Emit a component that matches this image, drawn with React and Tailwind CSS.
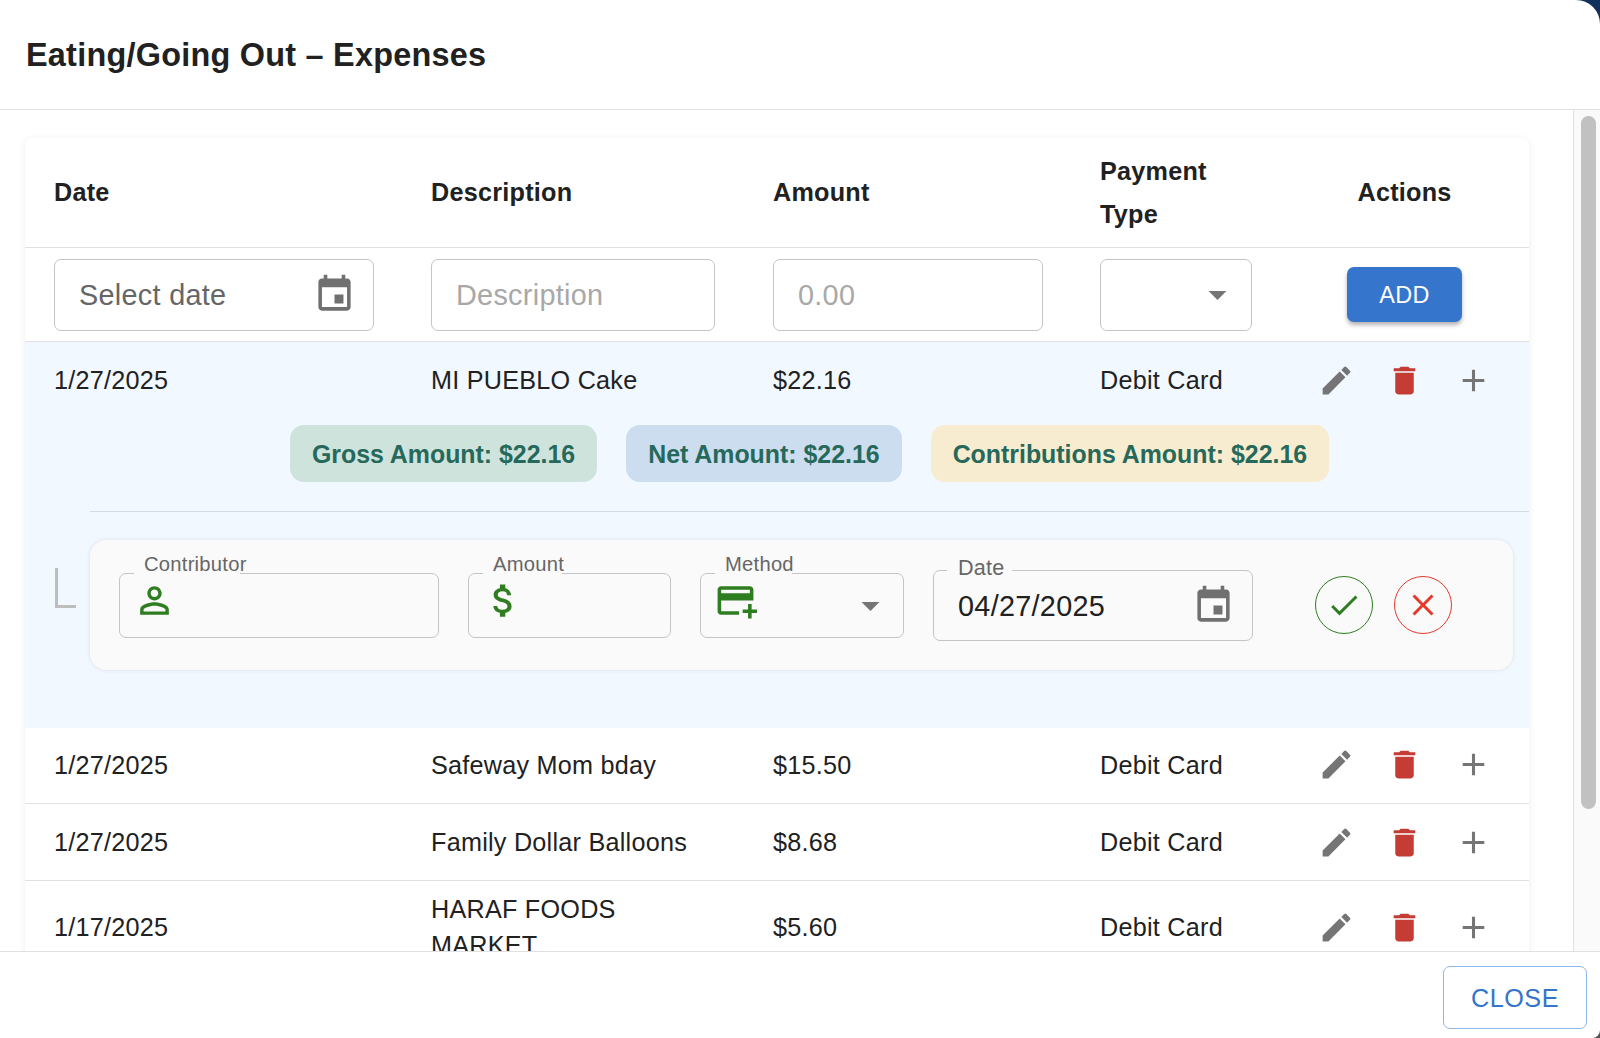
import React from "react";

const ROW_GRID = "grid grid-cols-[377px_341px_328px_209px_249px] items-center";

const ICONS = {
  edit: "M3 17.25V21h3.75L17.81 9.94l-3.75-3.75zM20.71 7.04c.39-.39.39-1.02 0-1.41l-2.34-2.34a.9959.9959 0 0 0-1.41 0l-1.83 1.83 3.75 3.75z",
  trash: "M6 19c0 1.1.9 2 2 2h8c1.1 0 2-.9 2-2V7H6zM19 4h-3.5l-1-1h-5l-1 1H5v2h14z",
  plus: "M19 13h-6v6h-2v-6H5v-2h6V5h2v6h6z",
  event: "M17 12h-5v5h5zM16 1v2H8V1H6v2H5c-1.11 0-1.99.9-1.99 2L3 19c0 1.1.89 2 2 2h14c1.1 0 2-.9 2-2V5c0-1.1-.9-2-2-2h-1V1zm3 18H5V8h14z",
  arrow: "M7 10l5 5 5-5z",
  person: "M12 5.9c1.16 0 2.1.94 2.1 2.1s-.94 2.1-2.1 2.1S9.9 9.16 9.9 8s.94-2.1 2.1-2.1m0 9c2.97 0 6.1 1.46 6.1 2.1v1.1H5.9V17c0-.64 3.13-2.1 6.1-2.1M12 4C9.79 4 8 5.79 8 8s1.79 4 4 4 4-1.79 4-4-1.79-4-4-4m0 9c-2.67 0-8 1.34-8 4v3h16v-3c0-2.66-5.33-4-8-4",
  money: "M11.8 10.9c-2.27-.59-3-1.2-3-2.15 0-1.09 1.01-1.85 2.7-1.85 1.78 0 2.44.85 2.5 2.1h2.21c-.07-1.72-1.12-3.3-3.21-3.81V3h-3v2.16c-1.94.42-3.5 1.68-3.5 3.61 0 2.31 1.91 3.46 4.7 4.13 2.5.6 3 1.48 3 2.41 0 .69-.49 1.79-2.7 1.79-2.06 0-2.87-.92-2.98-2.1h-2.2c.12 2.19 1.76 3.42 3.68 3.83V21h3v-2.15c1.95-.37 3.5-1.5 3.5-3.55 0-2.84-2.43-3.81-4.7-4.4",
  addCard: "M20 4H4c-1.11 0-1.99.89-1.99 2L2 18c0 1.11.89 2 2 2h10v-2H4v-6h18V6c0-1.11-.89-2-2-2m0 4H4V6h16zm4 9v2h-3v3h-2v-3h-3v-2h3v-3h2v3z",
  check: "M9 16.17 4.83 12l-1.42 1.41L9 19 21 7l-1.41-1.41z",
  close: "M19 6.41 17.59 5 12 10.59 6.41 5 5 6.41 10.59 12 5 17.59 6.41 19 12 13.41 17.59 19 19 17.59 13.41 12z",
};

const Icon = ({ name, className }) => (
  <svg viewBox="0 0 24 24" fill="currentColor" className={className}>
    <path d={ICONS[name]} />
  </svg>
);

const Actions = () => (
  <div className="flex justify-center">
    <span className="flex w-[68.5px] justify-center text-[#757575]">
      <Icon name="edit" className="h-[37px] w-[37px]" />
    </span>
    <span className="flex w-[68.5px] justify-center text-[#c43c34]">
      <Icon name="trash" className="h-[37px] w-[37px]" />
    </span>
    <span className="flex w-[68.5px] justify-center text-[#757575]">
      <Icon name="plus" className="h-[37px] w-[37px]" />
    </span>
  </div>
);

const Row = ({ date, description, amount, className }) => (
  <div className={`${ROW_GRID} ${className}`}>
    <div className="pl-[29px]">{date}</div>
    <div className="pl-[29px] pr-[30px]">{description}</div>
    <div className="pl-[30px]">{amount}</div>
    <div className="pl-[29px]">Debit Card</div>
    <Actions />
  </div>
);

// outlined field with a gap cut in the top border for its label
const Field = ({ label, width, height, notch, notchWidth, labelLeft, labelTop, labelSize, children }) => (
  <div className={`relative mt-[1px] flex shrink-0 items-center rounded-[7px] border border-[#c4c4c4] ${width} ${height}`}>
    <span className={`absolute top-[-2px] h-[4px] bg-[#fafafa] ${notch} ${notchWidth}`} />
    <span className={`absolute whitespace-nowrap leading-[24px] text-[#666666] ${labelLeft} ${labelTop} ${labelSize}`}>{label}</span>
    {children}
  </div>
);

export default function App() {
  return (
    <div className="h-screen w-full overflow-hidden bg-gradient-to-b from-[#12305c] to-[#555555] font-['Liberation_Sans',Arial,sans-serif]">
      <div className="flex h-full flex-col overflow-hidden rounded-tr-[24px] rounded-br-[8px] bg-white text-[25.2px] leading-[36px] tracking-[0.25px] text-[#212121]">
        <header className="flex h-[110px] shrink-0 items-center border-b border-[#e0e0e0] pl-[26px]">
          <h1 className="text-[32.4px] font-bold leading-[44px] text-[#212121]">Eating/Going Out – Expenses</h1>
        </header>

        <main className="flex min-h-0 flex-1">
          <div className="min-w-0 flex-1 overflow-hidden pl-[25px] pr-[44px] pt-[28px]">
            <div className="rounded-[7px] bg-white shadow-[0_1px_7px_rgba(0,0,0,0.08)]">
              <div className={`${ROW_GRID} h-[110px] border-b border-[#e0e0e0] font-bold leading-[43px]`}>
                <div className="pl-[29px]">Date</div>
                <div className="pl-[29px]">Description</div>
                <div className="pl-[30px]">Amount</div>
                <div className="w-[160px] pl-[29px]">Payment Type</div>
                <div className="text-center">Actions</div>
              </div>

              <div className={`${ROW_GRID} h-[94px] border-b border-[#e0e0e0] text-[28.8px] tracking-[0.3px]`}>
                <div className="pl-[29px]">
                  <div className="flex h-[72px] w-[320px] items-center justify-between rounded-[7px] border border-[#c4c4c4] pl-[24px] pr-[17px] text-[#666666]">
                    <span>Select date</span>
                    <Icon name="event" className="h-[43px] w-[43px] text-[#707070]" />
                  </div>
                </div>
                <div className="pl-[29px]">
                  <div className="flex h-[72px] w-[284px] items-center rounded-[7px] border border-[#c4c4c4] pl-[24px] text-[#a8a8a8]">Description</div>
                </div>
                <div className="pl-[30px]">
                  <div className="flex h-[72px] w-[270px] items-center rounded-[7px] border border-[#c4c4c4] pl-[24px] text-[#a8a8a8]">0.00</div>
                </div>
                <div className="pl-[29px]">
                  <div className="flex h-[72px] w-[152px] items-center justify-end rounded-[7px] border border-[#c4c4c4] pr-[12px]">
                    <Icon name="arrow" className="h-[43px] w-[43px] text-[#757575]" />
                  </div>
                </div>
                <div className="flex justify-center">
                  <button className="h-[55px] w-[115px] rounded-[7px] bg-[#3575cc] text-[23.4px] tracking-[0.4px] text-white shadow-[0_3px_4px_rgba(0,0,0,0.3)]">ADD</button>
                </div>
              </div>

              <div className="h-[386px] bg-[#f1f8ff]">
                <Row date="1/27/2025" description="MI PUEBLO Cake" amount="$22.16" className="min-h-[76px] py-[10px]" />
                <div className="ml-[65px] mt-[7px] flex justify-center gap-[29px] text-[24.9px] font-bold tracking-normal text-[#26695a]">
                  <span className="flex h-[57px] items-center rounded-[14px] bg-[#cfe3dd] px-[22px]">Gross Amount: $22.16</span>
                  <span className="flex h-[57px] items-center rounded-[14px] bg-[#cbddee] px-[22px]">Net Amount: $22.16</span>
                  <span className="flex h-[57px] items-center rounded-[14px] bg-[#f8ecd0] px-[22px]">Contributions Amount: $22.16</span>
                </div>
                <div className="ml-[65px] mt-[29px] border-t border-[#d5dbe6]" />
                <div className="mt-[28px] flex items-start">
                  <div className="ml-[30px] mr-[14px] mt-[28px] h-[40px] w-[21px] border-b-[3px] border-l-[3px] border-[#bdbdbd]" />
                  <div className="flex h-[130px] w-[1423px] items-center rounded-[16px] bg-[#fafafa] pl-[29px] shadow-[0_0_4px_rgba(0,0,0,0.10)]">
                    <div className="flex items-center gap-[29px]">
                      <Field label="Contributor" width="w-[320px]" height="h-[65px]" notch="left-[14px]" notchWidth="w-[106px]" labelLeft="left-[24px]" labelTop="top-[-22px]" labelSize="text-[20.2px]">
                        <Icon name="person" className="ml-[13px] -translate-y-[5px] h-[43px] w-[43px] text-[#2e7d20]" />
                      </Field>
                      <Field label="Amount" width="w-[203px]" height="h-[65px]" notch="left-[14px]" notchWidth="w-[79px]" labelLeft="left-[24px]" labelTop="top-[-22px]" labelSize="text-[20.2px]">
                        <Icon name="money" className="ml-[13px] -translate-y-[5px] h-[43px] w-[43px] text-[#2e7d20]" />
                      </Field>
                      <Field label="Method" width="w-[204px]" height="h-[65px]" notch="left-[14px]" notchWidth="w-[77px]" labelLeft="left-[24px]" labelTop="top-[-22px]" labelSize="text-[20.2px]">
                        <Icon name="addCard" className="ml-[13px] -translate-y-[5px] h-[43px] w-[43px] text-[#2e7d20]" />
                        <Icon name="arrow" className="ml-auto mr-[11px] h-[43px] w-[43px] text-[#757575]" />
                      </Field>
                      <Field label="Date" width="w-[320px]" height="h-[71px]" notch="left-[13px]" notchWidth="w-[65px]" labelLeft="left-[24px]" labelTop="top-[-15px]" labelSize="text-[21.6px]">
                        <span className="ml-[24px] text-[28.8px] tracking-[0.3px] text-[#212121]">04/27/2025</span>
                        <Icon name="event" className="ml-auto mr-[17px] h-[43px] w-[43px] text-[#707070]" />
                      </Field>
                    </div>
                    <button className="ml-[62px] flex h-[58px] w-[58px] items-center justify-center rounded-full border border-[#2e7d20] text-[#2e7d20]">
                      <Icon name="check" className="h-[36px] w-[36px]" />
                    </button>
                    <button className="ml-[21px] flex h-[58px] w-[58px] items-center justify-center rounded-full border border-[#e5392c] text-[#e5392c]">
                      <Icon name="close" className="h-[36px] w-[36px]" />
                    </button>
                  </div>
                </div>
              </div>

              <Row date="1/27/2025" description="Safeway Mom bday" amount="$15.50" className="min-h-[76px] border-b border-[#e0e0e0] pb-[11px] pt-[9px]" />
              <Row date="1/27/2025" description="Family Dollar Balloons" amount="$8.68" className="min-h-[77px] border-b border-[#e0e0e0] py-[10px]" />
              <Row date="1/17/2025" description="HARAF FOODS MARKET" amount="$5.60" className="py-[10px]" />
            </div>
          </div>

          {/* scrollbar track */}
          <div className="w-[27px] shrink-0 border-l border-[#e0e0e0] bg-[#fafafa] pl-[7px] pt-[6px]">
            <div className="h-[693px] w-[15px] rounded-full bg-[#c1c1c1]" />
          </div>
        </main>

        <footer className="flex h-[87px] shrink-0 justify-end border-t border-[#e0e0e0] pr-[13px] pt-[14px]">
          <button className="h-[63px] w-[144px] rounded-[7px] border border-[#8fb6ea] text-[25.2px] tracking-[0.5px] text-[#3475cc]">CLOSE</button>
        </footer>
      </div>
    </div>
  );
}
